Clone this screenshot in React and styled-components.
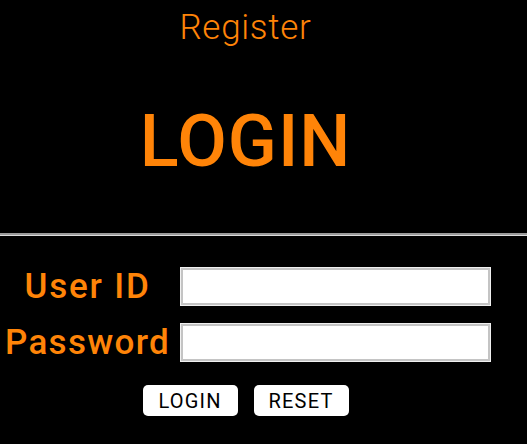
import React from "react";
import styled, { createGlobalStyle } from "styled-components";

const GlobalStyle = createGlobalStyle`
    html, body {
        margin:0;
        padding:0;
        background-color:#000;
    }
    body {
        font-family:Roboto, "Liberation Sans", sans-serif;
    }
`;

const orange = "#ff8408";

const Page = styled.div`
    width:100%;
    min-height:444px;
    background-color:#000;
    display:flex;
    flex-direction:column;
`;

const Top = styled.header`
    width:491px;
    display:flex;
    flex-direction:column;
    align-items:center;
    padding-top:8px;
`;

const RegisterLink = styled.a`
    color:${orange};
    font-size:35px;
    font-weight:300;
    line-height:40px;
    text-decoration:none;
    letter-spacing:0.7px;
    cursor:pointer;
`;

const Title = styled.h1`
    margin:54px 0 0;
    color:${orange};
    font-size:72px;
    font-weight:500;
    line-height:80px;
    letter-spacing:1px;
`;

const Rule = styled.hr`
    width:100%;
    margin:51px 0 0;
    border:none;
    border-top:2px solid #9a9a9a;
    border-bottom:1px solid #dcdcdc;
`;

const Form = styled.form`
    width:491px;
    margin-top:32px;
    display:flex;
    flex-direction:column;
    align-items:center;
`;

const Fields = styled.div`
    width:100%;
    display:grid;
    grid-template-columns:175px 310px;
    column-gap:6px;
    row-gap:19px;
    align-items:center;
`;

const Label = styled.label`
    color:${orange};
    font-size:35px;
    font-weight:500;
    letter-spacing:${props => props.spacing || "1.3px"};
    text-align:center;
    white-space:nowrap;
    line-height:37px;
`;

const Input = styled.input`
    box-sizing:border-box;
    width:309px;
    height:37px;
    margin:0;
    background:#fff;
    border:2px solid #c4c4c4;
    outline:1px solid #f0f0f0;
`;

const Buttons = styled.div`
    display:flex;
    gap:16px;
    margin-top:24px;
`;

const Button = styled.button`
    width:95px;
    height:31px;
    padding:0;
    border:none;
    border-radius:5px;
    background:#fff;
    color:#000;
    font-family:Roboto, "Liberation Sans", sans-serif;
    font-size:20px;
    letter-spacing:1.2px;
    cursor:pointer;
`;

export default function App() {
    return (
        <Page>
            <GlobalStyle />
            <Top>
                <RegisterLink>Register</RegisterLink>
                <Title>LOGIN</Title>
            </Top>
            <Rule />
            <Form onSubmit={e => e.preventDefault()}>
                <Fields>
                    <Label htmlFor="userid" spacing="1.8px">User ID</Label>
                    <Input id="userid" type="text" />
                    <Label htmlFor="password">Password</Label>
                    <Input id="password" type="password" />
                </Fields>
                <Buttons>
                    <Button type="submit">LOGIN</Button>
                    <Button type="reset">RESET</Button>
                </Buttons>
            </Form>
        </Page>
    );
}
